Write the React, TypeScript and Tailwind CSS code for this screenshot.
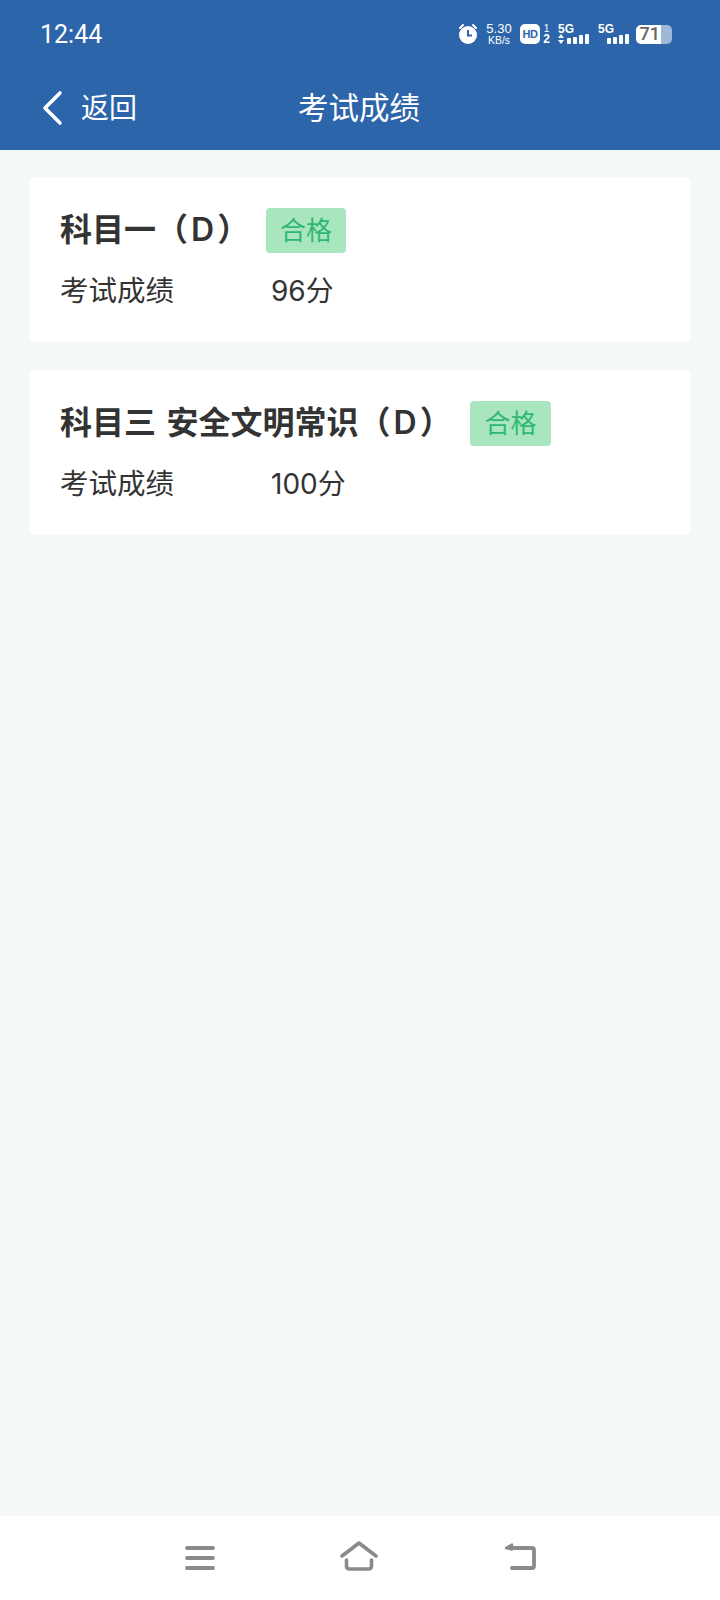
import React from "react";

const cjk = { fontFamily: '"Inter", "Noto Sans CJK SC", sans-serif' };
const liberation = { fontFamily: '"Liberation Sans", sans-serif' };

function Signal() {
  return (
    <div className="flex items-end gap-[2px]">
      <div className="h-[6px] w-[4px] rounded-[1px] bg-white" />
      <div className="h-[7px] w-[4px] rounded-[1px] bg-white" />
      <div className="h-[9px] w-[4px] rounded-[1px] bg-white" />
      <div className="h-[10px] w-[4px] rounded-[1px] bg-white" />
    </div>
  );
}

function StatusBar() {
  return (
    <div className="flex h-[68px] items-center justify-between pl-[40px] pr-[48px] text-white">
      <span className="text-[25px] font-normal leading-none" style={{ fontFamily: "Roboto, sans-serif" }}>12:44</span>
      <div className="flex items-center">
        <svg width="22" height="22" viewBox="0 0 22 22" className="mr-[7px]">
          <circle cx="11" cy="12" r="9" fill="#fff" />
          <path d="M3 5 L6 2 M19 5 L16 2" stroke="#fff" strokeWidth="2" strokeLinecap="round" />
          <path d="M11 7 V12.5 H15" stroke="#2c65a9" strokeWidth="2" fill="none" />
        </svg>
        <div className="mr-[8px] flex w-[26px] flex-col items-center leading-none" style={liberation}>
          <span className="text-[13px] leading-[12px]">5.30</span>
          <span className="text-[10.5px] leading-[10px]">KB/s</span>
        </div>
        <div className="mr-[3px] flex h-[20px] w-[20px] items-center justify-center rounded-[5px] bg-white text-[11px] font-bold tracking-[-0.5px] text-[#2c65a9]" style={liberation}>HD</div>
        <div className="mr-[8px] flex w-[7px] flex-col items-center font-bold" style={liberation}>
          <span className="text-[10px] font-normal leading-[10px]">1</span>
          <span className="text-[12px] leading-[11px]">2</span>
        </div>
        <div className="mr-[9px] flex w-[31px] flex-col" style={liberation}>
          <span className="text-[12px] font-bold leading-[10px]">5G</span>
          <div className="flex items-end justify-between">
            <svg width="6" height="10" viewBox="0 0 6 10"><path d="M3 0 L6 4 H0 Z M0 6 H6 L3 10 Z" fill="#fff" /></svg>
            <Signal />
          </div>
        </div>
        <div className="mr-[7px] flex w-[31px] flex-col" style={liberation}>
          <span className="text-[12px] font-bold leading-[10px]">5G</span>
          <div className="flex justify-end">
            <Signal />
          </div>
        </div>
        <div className="flex h-[19px] w-[36px] overflow-hidden rounded-[5px] bg-[#9db8d8]">
          <div className="flex h-full w-[25px] items-center justify-end rounded-l-[5px] bg-white pr-[1px] text-[18px] font-medium leading-none text-[#666]" style={{ fontFamily: "Roboto, sans-serif" }}>71</div>
        </div>
      </div>
    </div>
  );
}

function Card({ title, score, wide }: { title: string; score: string; wide: boolean }) {
  return (
    <div className="rounded-[6px] bg-white pl-[31px] pr-[30px] pt-[31px] pb-[31px]">
      <div className="flex h-[45px] items-center">
        <span className={"pb-[2px] text-[32px] font-bold leading-none text-[#333333] [word-spacing:3px] " + (wide ? "w-[410px]" : "w-[206px]")}>
          {title}（<span className="mx-[3px] font-semibold">D</span>）
        </span>
        <span className={"flex h-[45px] items-center justify-center rounded-[4px] bg-[#a9e6bf] text-[26px] leading-none text-[#2fb872] " + (wide ? "w-[81px]" : "w-[80px]")}>合格</span>
      </div>
      <div className="mt-[18px] flex h-[40px] items-center text-[28.5px] leading-none text-[#333333]">
        <span className="w-[211px]">考试成绩</span>
        <span className="text-[28px]">{score}</span>
      </div>
    </div>
  );
}

export default function App() {
  return (
    <div className="flex h-[1600px] w-[720px] flex-col bg-[#f4f8f9]" style={cjk}>
      <header className="h-[150px] bg-[#2c65a9]">
        <StatusBar />
        <div className="flex h-[82px] items-center pb-[2px] text-white">
          <svg width="26" height="36" viewBox="0 0 26 36" className="ml-[39px]" fill="none">
            <path d="M21 3 L6 18 L21 33" stroke="#fff" strokeWidth="3.6" strokeLinecap="round" strokeLinejoin="round" />
          </svg>
          <span className="ml-[16px] text-[28px] leading-none">返回</span>
          <span className="ml-[161px] text-[30.5px] leading-none">考试成绩</span>
        </div>
      </header>
      <main className="flex flex-1 flex-col gap-[28px] px-[29px] pt-[27px]">
        <Card title="科目一" score="96分" wide={false} />
        <Card title="科目三 安全文明常识" score="100分" wide={true} />
      </main>
      <nav className="flex h-[84px] items-start justify-center gap-[125.5px] bg-white pt-[25px]">
        <svg width="30" height="30" viewBox="0 0 30 30" fill="none" stroke="#8a8a8a" strokeWidth="3.8" strokeLinecap="round">
          <path d="M2 7 H28 M2 17 H28 M2 27 H28" />
        </svg>
        <svg width="38" height="30" viewBox="0 0 38 30" fill="none" stroke="#8a8a8a" strokeWidth="3.6" strokeLinecap="round" strokeLinejoin="round">
          <path d="M2 15 L19 2 L36 15" />
          <path d="M6.5 19 V25 Q6.5 28 9.5 28 H28.5 Q31.5 28 31.5 25 V19" />
        </svg>
        <svg width="32" height="30" viewBox="0 0 32 30" fill="none" stroke="#8a8a8a" strokeWidth="3.8" strokeLinecap="round" strokeLinejoin="round">
          <path d="M8 7 H28 Q30 7 30 9 V25 Q30 27 28 27 H8" />
          <path d="M2 7 L8 3.5 V8.5 Z" fill="#8a8a8a" strokeWidth="2.4" />
        </svg>
      </nav>
    </div>
  );
}
